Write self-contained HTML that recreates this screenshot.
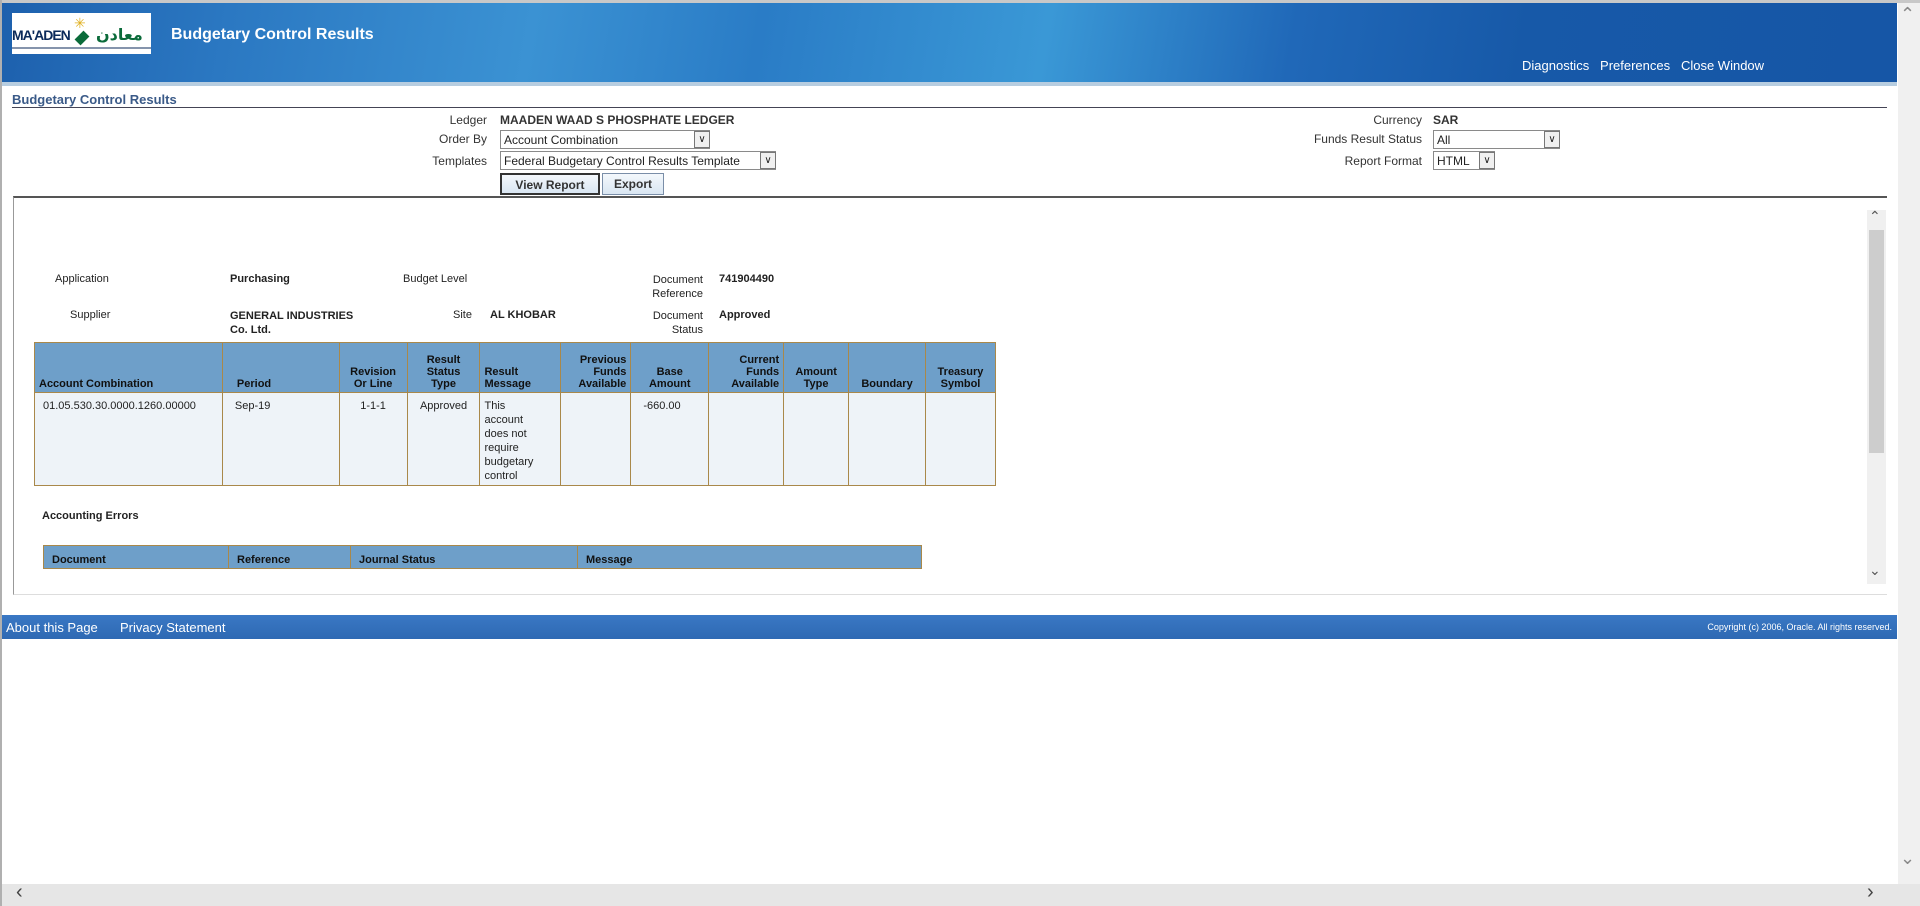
<!DOCTYPE html>
<html><head><meta charset="utf-8"><style>
*{margin:0;padding:0;box-sizing:border-box}
body{width:1920px;height:906px;position:relative;overflow:hidden;background:#fff;font-family:"Liberation Sans",Arial,sans-serif;color:#222}
.a{position:absolute;white-space:nowrap}
.hdr{left:2px;top:3px;width:1895px;height:79px;background:linear-gradient(100deg,#1d60ad 0%,#2b78c2 12%,#3b92d3 28%,#2a7cc6 40%,#3a98d6 55%,#2068b8 68%,#1759a8 80%,#1656a6 100%)}
.strip{left:2px;top:82px;width:1895px;height:4px;background:#b7cde0}
.lbl{font-size:12px;color:#333;text-align:right}
.sel{background:#fff;border:1px solid #8a8a8a;border-right:none;font-size:12px;padding:1px 3px;height:19px;line-height:16px;color:#222}
.arr{position:absolute;right:0;top:0;width:16px;height:17px;border:1px solid #777;background:#f0f0f0;font-size:10px;text-align:center;line-height:15px}
.btn{border:1px solid #7a8ea8;background:linear-gradient(#f4f8fc,#d9e6f2);font-size:12px;font-weight:bold;color:#333;text-align:center;line-height:20px;height:22px}
table{border-collapse:collapse;position:absolute}
td,th{border:1px solid #a9884a;font-size:11px;vertical-align:top}
th{background:#6e9fc9;color:#111;font-weight:bold;vertical-align:bottom;padding:2px 4px}
td{background:#eef3f8;padding:6px 4px 0 4px;line-height:14px}
.t{font-size:11px}
.b{font-weight:bold}
</style></head><body>
<div class="a" style="left:0;top:0;width:1920px;height:3px;background:#c8c8c8"></div>
<div class="a" style="left:0;top:0;width:2px;height:906px;background:#b0b0b0"></div>
<div class="a hdr"></div>
<div class="a strip"></div>
<div class="a" style="left:12px;top:13px;width:139px;height:41px;background:#fff">
 <div class="a" style="left:0;top:14px;font-size:14px;font-weight:bold;color:#0b2a5a;letter-spacing:-1px">MA'ADEN</div>
 <div class="a" style="left:62px;top:2px;font-size:14px;color:#e0b020">✳</div>
 <div class="a" style="left:64px;top:16px;width:12px;height:18px;background:#0b6b3a;transform:rotate(45deg) scale(.7)"></div>
 <div class="a" style="left:84px;top:12px;font-size:16px;font-weight:bold;color:#0b6b3a;font-family:'DejaVu Sans',sans-serif">معادن</div>
 <div class="a" style="left:0;top:34px;width:139px;height:2px;background:#0b2a5a;opacity:.5"></div>
</div>
<div class="a" style="left:171px;top:26px;font-size:16px;font-weight:bold;color:#fff">Budgetary Control Results</div>
<div class="a" style="left:1522px;top:58px;font-size:13px;color:#fff">Diagnostics&nbsp;&nbsp; Preferences&nbsp;&nbsp; Close Window</div>

<div class="a" style="left:12px;top:92px;font-size:13px;font-weight:bold;color:#3a5a88">Budgetary Control Results</div>
<div class="a" style="left:12px;top:107px;width:1875px;height:1px;background:#445"></div>

<div class="a lbl" style="left:380px;top:113px;width:107px">Ledger</div>
<div class="a" style="left:500px;top:113px;font-size:12px;font-weight:bold;color:#333">MAADEN WAAD S PHOSPHATE LEDGER</div>
<div class="a lbl" style="left:380px;top:132px;width:107px">Order By</div>
<div class="a sel" style="left:500px;top:130px;width:210px">Account Combination<span class="arr">&#8744;</span></div>
<div class="a lbl" style="left:380px;top:154px;width:107px">Templates</div>
<div class="a sel" style="left:500px;top:151px;width:276px">Federal Budgetary Control Results Template<span class="arr">&#8744;</span></div>
<div class="a btn" style="left:500px;top:173px;width:100px;border:2px solid #333">View Report</div>
<div class="a btn" style="left:602px;top:173px;width:62px">Export</div>

<div class="a lbl" style="left:1300px;top:113px;width:122px">Currency</div>
<div class="a" style="left:1433px;top:113px;font-size:12px;font-weight:bold;color:#333">SAR</div>
<div class="a lbl" style="left:1280px;top:132px;width:142px">Funds Result Status</div>
<div class="a sel" style="left:1433px;top:130px;width:127px">All<span class="arr">&#8744;</span></div>
<div class="a lbl" style="left:1300px;top:154px;width:122px">Report Format</div>
<div class="a sel" style="left:1433px;top:151px;width:62px">HTML<span class="arr">&#8744;</span></div>

<div class="a" style="left:13px;top:196px;width:1874px;height:399px;border-top:2px solid #555;border-left:1px solid #999;border-bottom:1px solid #ddd"></div>
<div class="a" style="left:1867px;top:210px;width:19px;height:374px;background:#f0f0f0"></div>
<div class="a" style="left:1869px;top:230px;width:15px;height:223px;background:#cdcdcd"></div>
<div class="a" style="left:1869px;top:208px;font-size:14px;color:#555">&#8963;</div>
<div class="a" style="left:1869px;top:562px;font-size:14px;color:#555">&#8964;</div>

<div class="a t" style="left:55px;top:273px">Application</div>
<div class="a t b" style="left:230px;top:273px">Purchasing</div>
<div class="a t" style="left:403px;top:273px">Budget Level</div>
<div class="a t" style="left:620px;top:273px;width:83px;text-align:right;line-height:14px">Document<br>Reference</div>
<div class="a t b" style="left:719px;top:273px">741904490</div>
<div class="a t" style="left:70px;top:309px">Supplier</div>
<div class="a t b" style="left:230px;top:309px;line-height:14px">GENERAL INDUSTRIES<br>Co. Ltd.</div>
<div class="a t" style="left:453px;top:309px">Site</div>
<div class="a t b" style="left:490px;top:309px">AL KHOBAR</div>
<div class="a t" style="left:620px;top:309px;width:83px;text-align:right;line-height:14px">Document<br>Status</div>
<div class="a t b" style="left:719px;top:309px">Approved</div>

<table style="left:34px;top:342px;width:962px">
<tr style="height:50px">
<th style="width:188px;text-align:left">Account Combination</th>
<th style="width:117px;text-align:left;padding-left:14px">Period</th>
<th style="width:68px">Revision<br>Or Line</th>
<th style="width:73px">Result<br>Status<br>Type</th>
<th style="width:81px;text-align:left">Result<br>Message</th>
<th style="width:70px;text-align:right">Previous<br>Funds<br>Available</th>
<th style="width:78px">Base<br>Amount</th>
<th style="width:75px;text-align:right">Current<br>Funds<br>Available</th>
<th style="width:65px">Amount<br>Type</th>
<th style="width:77px">Boundary</th>
<th style="width:70px">Treasury<br>Symbol</th>
</tr>
<tr style="height:93px">
<td style="padding-left:8px">01.05.530.30.0000.1260.00000</td>
<td style="padding-left:12px">Sep-19</td>
<td style="text-align:center">1-1-1</td>
<td style="text-align:center">Approved</td>
<td>This<br>account<br>does not<br>require<br>budgetary<br>control</td>
<td></td>
<td style="padding-left:12px">-660.00</td>
<td></td><td></td><td></td><td></td>
</tr></table>

<div class="a t b" style="left:42px;top:510px">Accounting Errors</div>
<table style="left:43px;top:545px;width:879px">
<tr style="height:23px">
<th style="width:185px;text-align:left;padding-left:8px">Document</th>
<th style="width:122px;text-align:left;padding-left:8px">Reference</th>
<th style="width:227px;text-align:left;padding-left:8px">Journal Status</th>
<th style="text-align:left;padding-left:8px">Message</th>
</tr></table>

<div class="a" style="left:2px;top:615px;width:1895px;height:24px;background:linear-gradient(#3a78c4,#2e69b3)"></div>
<div class="a" style="left:6px;top:620px;font-size:13px;color:#fff">About this Page</div>
<div class="a" style="left:120px;top:620px;font-size:13px;color:#fff">Privacy Statement</div>
<div class="a" style="left:600px;top:622px;width:1292px;text-align:right;font-size:9px;color:#fff">Copyright (c) 2006, Oracle. All rights reserved.</div>

<div class="a" style="left:1898px;top:3px;width:22px;height:881px;background:#f0f0f0"></div>
<div class="a" style="left:1900px;top:4px;font-size:18px;color:#888">&#8963;</div>
<div class="a" style="left:1900px;top:848px;font-size:18px;color:#888">&#8964;</div>
<div class="a" style="left:2px;top:884px;width:1918px;height:22px;background:#e6e6e6"></div>
<div class="a" style="left:16px;top:881px;font-size:20px;color:#444">&#8249;</div>
<div class="a" style="left:1867px;top:881px;font-size:20px;color:#444">&#8250;</div>
</body></html>
